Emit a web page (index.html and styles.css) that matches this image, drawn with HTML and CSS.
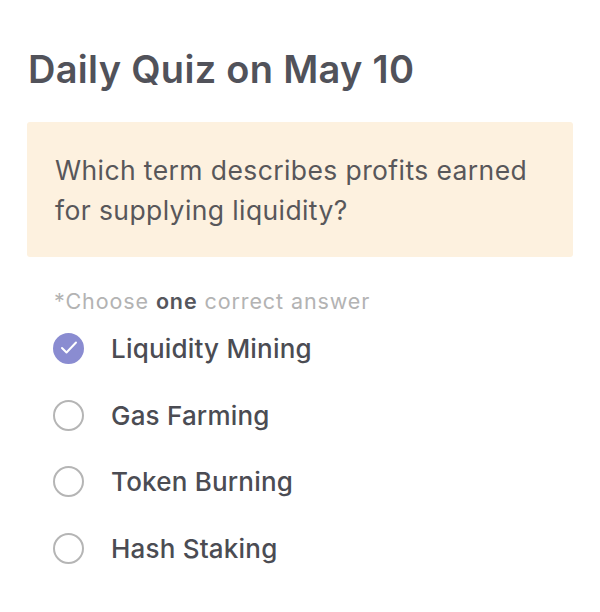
FILE: index.html
```html
<!DOCTYPE html>
<html lang="en">
<head>
  <meta charset="UTF-8">
  <meta name="viewport" content="width=device-width, initial-scale=1">
  <title>Daily Quiz</title>
  <link rel="stylesheet" href="styles.css">
</head>
<body>
  <div class="quiz">
    <h1>Daily Quiz on May 10</h1>
    <!-- Question card -->
    <div class="question">
      Which term describes profits earned for supplying liquidity?
    </div>
    <p class="hint">*Choose <b>one</b> correct answer</p>
    <!-- Answer options -->
    <ul class="options">
      <li class="option checked">
        <span class="radio">
          <svg width="27" height="27" viewBox="0 0 27 27"><path d="M7 13l4.5 4.5 9.5-10" fill="none" stroke="#fff" stroke-width="2" stroke-linecap="round" stroke-linejoin="round"/></svg>
        </span>
        Liquidity Mining
      </li>
      <li class="option"><span class="radio"></span>Gas Farming</li>
      <li class="option"><span class="radio"></span>Token Burning</li>
      <li class="option"><span class="radio"></span>Hash Staking</li>
    </ul>
  </div>
</body>
</html>
```

FILE: styles.css
```css
body {
  margin: 0;
  background: #fff;
  font-family: Inter, "Noto Sans", sans-serif;
}
.quiz {
  padding: 46px 27px 0 27px;
}
h1 {
  margin: 0 0 30px 1px;
  font-size: 38px;
  font-weight: 600;
  color: #51525a;
  letter-spacing: 0.3px;
}
.question {
  background: #fdf1df;
  border-radius: 3px;
  padding: 28px 28px 27px 28px;
  font-size: 26.5px;
  line-height: 40px;
  color: #58575a;
  font-weight: 400;
  letter-spacing: 0.4px;
}
.hint {
  margin: 32px 0 2px 27px;
  font-size: 21.5px;
  line-height: 24px;
  letter-spacing: 0.9px;
  color: #b3b3b3;
}
.hint b {
  color: #55565c;
  font-weight: 600;
}
.options {
  list-style: none;
  margin: 0;
  padding: 0 0 0 26px;
}
.option {
  display: flex;
  align-items: center;
  gap: 27px;
  height: 66.7px;
  font-size: 26px;
  font-weight: 500;
  color: #4b4c53;
  letter-spacing: 0.2px;
}
.radio {
  width: 27px;
  height: 27px;
  border: 2px solid #b5b5b5;
  border-radius: 50%;
  display: flex;
  align-items: center;
  justify-content: center;
  flex-shrink: 0;
}
.option.checked .radio {
  background: #8a8cd1;
  border-color: #8a8cd1;
}
```
